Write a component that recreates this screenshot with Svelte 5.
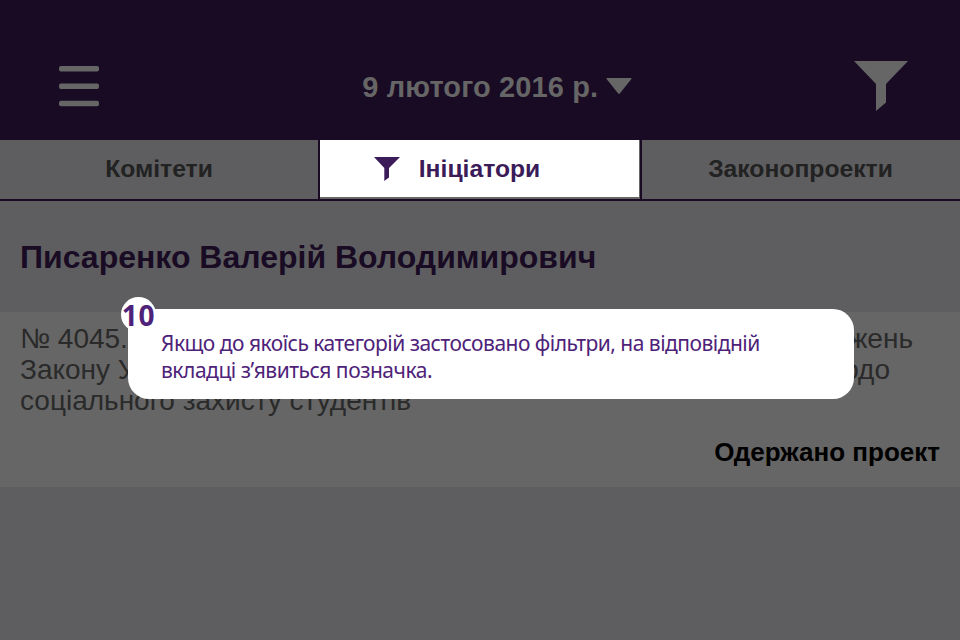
<script>
  const tabs = [
    { label: 'Комітети', active: false },
    { label: 'Ініціатори', active: true },
    { label: 'Законопроекти', active: false }
  ];
</script>

<div class="screen">
  <header>
    <svg class="menu" width="40" height="41" viewBox="0 0 40 41">
      <rect x="0" y="0" width="40" height="5.4" rx="2" />
      <rect x="0" y="17.5" width="40" height="5.4" rx="2" />
      <rect x="0" y="34.8" width="40" height="5.4" rx="2" />
    </svg>
    <div class="date">
      <span>9 лютого 2016 р.</span>
      <svg width="26" height="16" viewBox="0 0 26 16"><path d="M1 0H25Q26 0 25.4 1L14 15.3Q13 16.3 12 15.3L.6 1Q0 0 1 0Z" /></svg>
    </div>
    <svg class="filter" width="54" height="50" viewBox="0 0 54 50"><path d="M0 0H54L32 23V41.5L22 50V23Z" /></svg>
  </header>

  <nav>
    {#each tabs as tab}
      <div class="tab" class:active={tab.active}>
        {#if tab.active}
          <svg width="26" height="24" viewBox="0 0 26 24"><path d="M0 0H26L15 11V20.5L10.3 24V11Z" /></svg>
        {/if}
        <span>{tab.label}</span>
      </div>
    {/each}
  </nav>

  <h1><span>Писаренко Валерій Володимирович</span></h1>

  <article>
    <div class="line first"><span>№ 4045.</span><span>жень</span></div>
    <div class="line second"><span>Закону У</span><span>одо</span></div>
    <div class="line"><span>соціального захисту студентів</span></div>
    <div class="status"><span>Одержано проект</span></div>
  </article>

  <aside>
    <div class="badge"><span>10</span></div>
    <p class="tip1">Якщо до якоїсь категорій застосовано фільтри, на відповідній</p>
    <p class="tip2">вкладці з’явиться позначка.</p>
  </aside>
</div>

<style>
  :global(body) { margin: 0; background: #5e5e60; }
  .screen {
    position: relative;
    width: 960px;
    height: 640px;
    overflow: hidden;
    background: #5e5e60;
    font-family: "Liberation Sans", Arial, sans-serif;
    white-space: nowrap;
  }
  svg { display: block; flex: none; }
  header {
    height: 140px;
    box-sizing: border-box;
    padding: 60px 52px 0 59px;
    display: flex;
    align-items: flex-start;
    justify-content: space-between;
    background: #190b24;
    color: #666;
    fill: #666;
  }
  .menu { margin-top: 6px; }
  .filter { margin-top: 1px; }
  .date {
    display: flex;
    gap: 8px;
    margin: 10px 0 0 41.5px;
    font-size: 29px;
    letter-spacing: 0.12px;
    line-height: 34px;
    font-weight: 700;
  }
  .date svg { margin-top: 8px; }
  nav {
    display: flex;
    height: 59px;
    border-bottom: 2px solid #190b24;
  }
  .tab {
    display: flex;
    align-items: center;
    justify-content: center;
    box-sizing: border-box;
    width: 318px;
    height: 59px;
    padding-bottom: 1px;
    color: #222;
    font-size: 24.7px;
    font-weight: 700;
  }
  .tab:last-child { padding-right: 1px; }
  .tab.active {
    width: 324px;
    padding: 0 66px 1px 20px;
    border: solid #190b24;
    border-width: 0 2px;
    background: #fff;
    box-shadow: inset -1px -2px #666;
    color: #3b1c59;
    fill: #3b1c59;
    gap: 19px;
  }
  h1 {
    margin: 0;
    padding: 36px 20px 0;
    box-sizing: border-box;
    height: 111px;
    font-size: 32px;
    line-height: 40px;
    color: #190b24;
  }
  article {
    height: 175px;
    box-sizing: border-box;
    padding: 11px 20px 0;
    background: #666;
    color: #2a2a2a;
    font-size: 28px;
    line-height: 31px;
  }
  .line { display: flex; justify-content: space-between; }
  .first { padding-right: 27px; }
  .second { padding-right: 50px; }
  .status {
    margin-top: 21px;
    text-align: right;
    font-size: 26px;
    font-weight: 700;
    color: #000;
  }
  aside {
    position: absolute;
    left: 128px;
    top: 308.5px;
    width: 726px;
    height: 90px;
    box-sizing: border-box;
    padding: 21.5px 33px 0;
    border-radius: 21px;
    background: #fff;
    color: #4e2279;
    font-family: "Noto Sans", sans-serif;
    font-size: 21px;
    line-height: 27px;
  }
  p { margin: 0; }
  .tip1 { letter-spacing: -0.51px; }
  .tip2 { letter-spacing: -0.47px; }
  .badge {
    position: absolute;
    left: -7px;
    top: -12px;
    width: 35px;
    height: 35px;
    border-radius: 50%;
    background: #fff;
    display: flex;
    align-items: center;
    justify-content: center;
    font-size: 28px;
    letter-spacing: 0.8px;
    font-weight: 700;
    padding-top: 2px;
    box-sizing: border-box;
  }
</style>
